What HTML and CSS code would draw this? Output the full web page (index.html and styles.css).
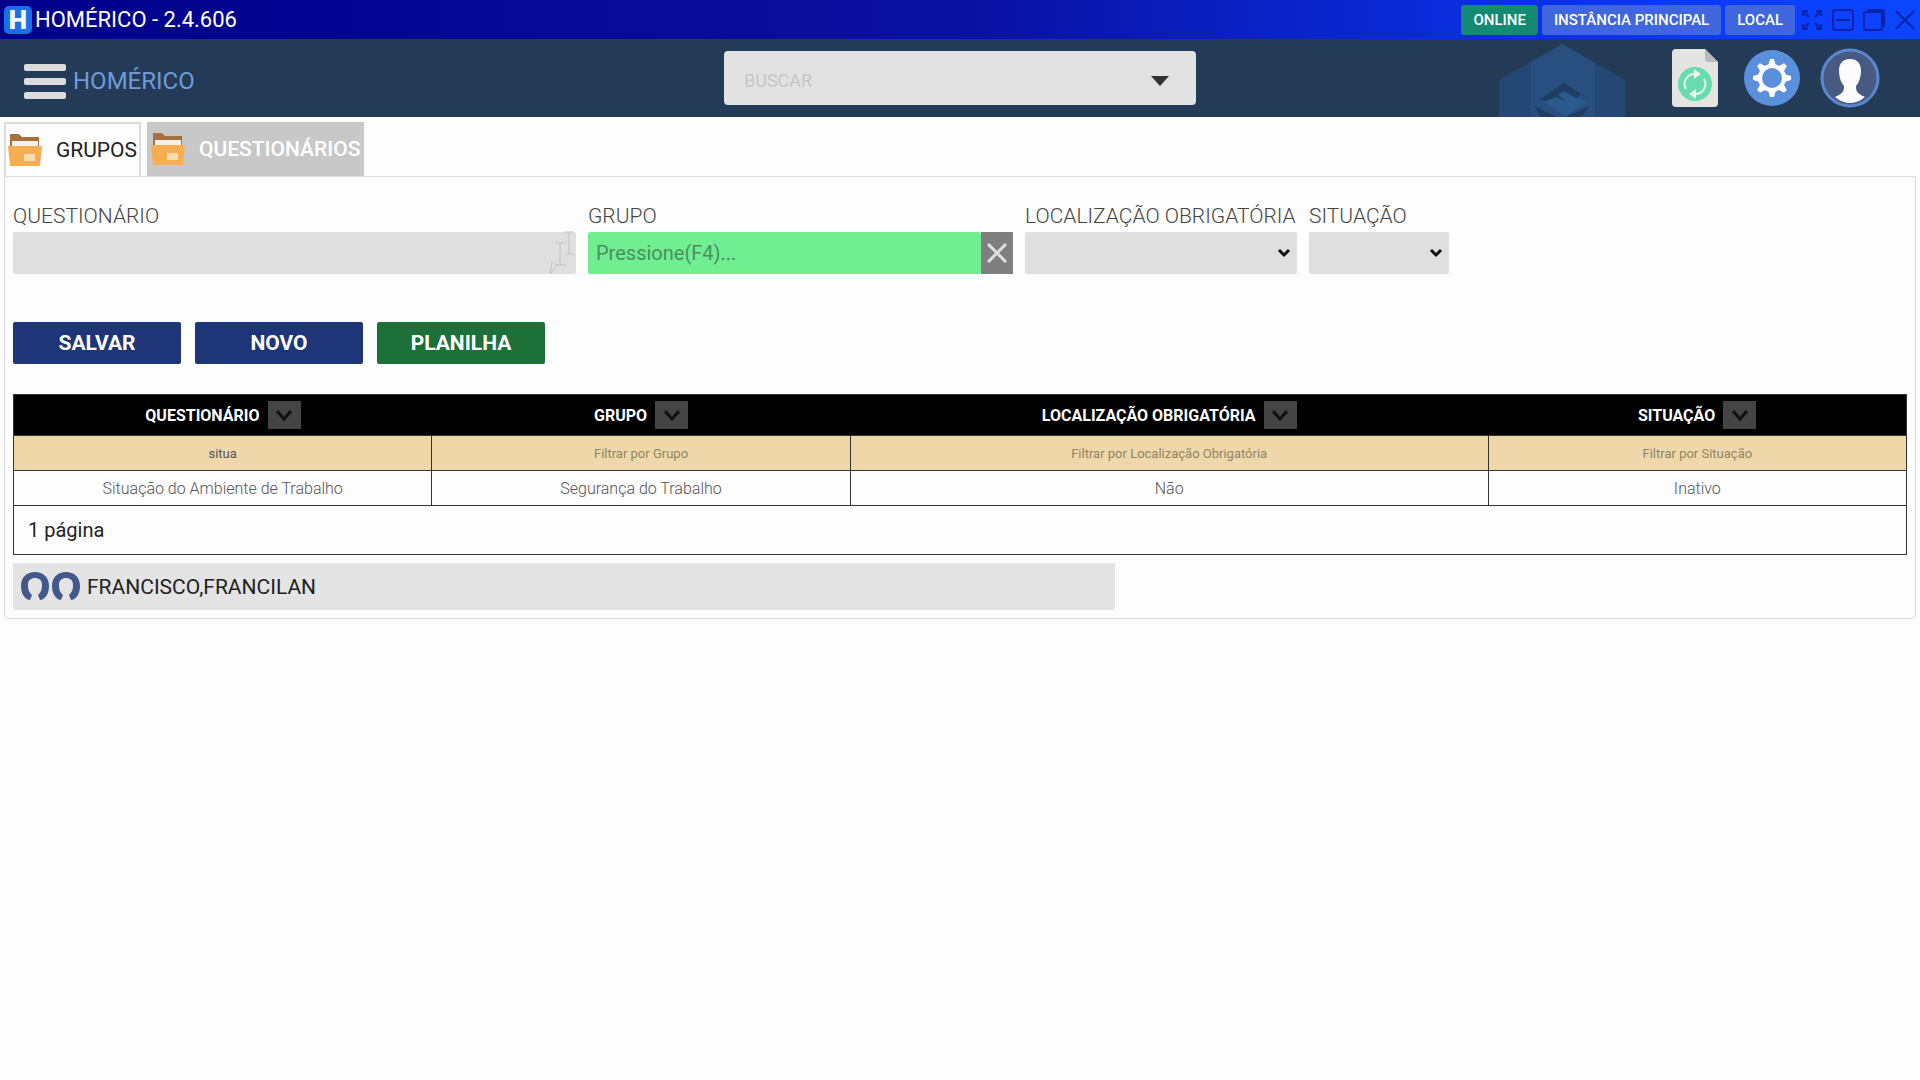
FILE: index.html
```html
<!DOCTYPE html>
<html lang="pt-BR">
<head>
    <meta charset="UTF-8">
    <meta name="viewport" content="width=device-width, initial-scale=1.0">
    <title>HOMÉRICO - 2.4.606</title>
    <link rel="stylesheet" href="styles.css">
</head>
<body>
    <div class="titlebar">
        <span class="logo">H</span>
        <span class="app-name">HOMÉRICO - 2.4.606</span>
        <div class="badges">
            <span class="badge online">ONLINE</span>
            <span class="badge">INSTÂNCIA PRINCIPAL</span>
            <span class="badge">LOCAL</span>
        </div>
        <div class="window-buttons">
            <button type="button" aria-label="Tela cheia">
                <svg viewBox="0 0 22 22"><path d="M8 8 2 2M2 7V2h5M14 8l6-6M15 2h5v5M8 14l-6 6M2 15v5h5M14 14l6 6M20 15v5h-5"/></svg>
            </button>
            <button type="button" aria-label="Minimizar">
                <svg viewBox="0 0 22 22"><rect x="1" y="1" width="20" height="20" rx="2"/><path d="M4 11h14"/></svg>
            </button>
            <button type="button" aria-label="Restaurar">
                <svg viewBox="0 0 22 22"><rect x="1" y="3" width="18" height="18" rx="2"/><path d="M4 1h15q2 0 2 2v15"/></svg>
            </button>
            <button type="button" aria-label="Fechar">
                <svg viewBox="0 0 22 22"><path d="M2 2l18 18M20 2 2 20"/></svg>
            </button>
        </div>
    </div>

    <header class="header">
        <div class="brand">
            <button type="button" class="menu" aria-label="Menu"><span></span><span></span><span></span></button>
            <span class="brand-name">HOMÉRICO</span>
        </div>
        <div class="search">
            <input type="text" placeholder="BUSCAR" aria-label="Buscar">
            <svg class="caret" viewBox="0 0 18 10"><path d="M0 0h18L9 10z"/></svg>
        </div>
        <div class="tools">
            <svg class="hexagon" viewBox="0 0 126 73">
                <path fill="#264b78" d="M63 0 126 36V73H0V36z"/>
                <path fill="#284f80" d="M63 0 96 19V73H32V19z"/>
                <path fill="#234570" d="M32 18v55H0V36zM96 18v55h30V36z" opacity=".6"/>
                <path fill="#2b5a8e" d="M44 57 66 47l22 11-22 14z"/>
                <path fill="#1d3d63" d="M40 56 65 39l17 11-5 4-12-7-6 4 8 6-10-4-10 4z"/>
                <path fill="#1d3d63" d="M35 62 58 73H42zM91 62 66 73h16z"/>
            </svg>
            <button type="button" class="tool" aria-label="Atualizar">
                <svg class="file" viewBox="0 0 46 58">
                    <path fill="#e4e4e2" d="M4 0h29l13 13v41q0 4-4 4H4q-4 0-4-4V4q0-4 4-4z"/>
                    <path fill="#b9b9be" d="M33 0 46 13H36q-3 0-3-3z"/>
                    <circle cx="23" cy="35" r="17" fill="#67dcae"/>
                    <path fill="none" stroke="#e9f7ee" stroke-width="2" d="M14 40a10 10 0 0 1 9-15M32 30a10 10 0 0 1-9 15"/>
                    <path fill="#e9f7ee" d="M22 20l7 5-7 5zM24 50l-7-5 7-5z"/>
                </svg>
            </button>
            <button type="button" class="tool" aria-label="Configurações">
                <svg class="gear" viewBox="-28 -28 56 56">
                    <circle r="28" fill="#5a8fdc"/>
                    <g fill="#fff">
                        <circle r="14"/>
                        <path id="tooth" d="M-4-12-2-19h4l2 7V12l-2 7h-4l-2-7z"/>
                        <use href="#tooth" transform="rotate(45)"/>
                        <use href="#tooth" transform="rotate(90)"/>
                        <use href="#tooth" transform="rotate(135)"/>
                    </g>
                    <circle r="10" fill="#5a8fdc"/>
                </svg>
            </button>
            <button type="button" class="tool" aria-label="Usuário">
                <svg class="avatar" viewBox="-30 -30 60 60">
                    <circle r="28" fill="#485a82" stroke="#5a88cf" stroke-width="3"/>
                    <path fill="#fcfcfc" d="M0-19C8-19 11-14 11-7 11 0 8 6 6 8c0 6 1 7 9 11Q8 25 0 25t-15-6C-7 15-6 14-6 8-8 6-11 0-11-7c0-7 3-12 11-12z"/>
                </svg>
            </button>
        </div>
    </header>

    <nav class="tabs">
        <button type="button" class="tab active">
            <svg class="folder" viewBox="0 0 34 34"><path fill="#a8703f" d="M2 1h9l3 3h17v12H2z"/><path fill="#f4f0ea" d="M4 8h26v10H4z"/><path fill="#f7ad52" d="M0 13h34l-2 20H2z"/><path fill="#f8dcae" d="M16 21h11v7H16z"/></svg>
            GRUPOS
        </button>
        <button type="button" class="tab">
            <svg class="folder" viewBox="0 0 34 34"><path fill="#a8703f" d="M2 1h9l3 3h17v12H2z"/><path fill="#f4f0ea" d="M4 8h26v10H4z"/><path fill="#f7ad52" d="M0 13h34l-2 20H2z"/><path fill="#f8dcae" d="M16 21h11v7H16z"/></svg>
            QUESTIONÁRIOS
        </button>
    </nav>

    <main class="panel">
        <form class="fields">
            <div class="field field-name">
                <label for="questionario">QUESTIONÁRIO</label>
                <input type="text" id="questionario">
                <svg class="cursor" viewBox="0 0 28 52"><path d="M16 8h10M21 8v22M17 30h9M7 19h11M12 19v22M7 41h11M2 50l8-10M2 50l2-12"/></svg>
            </div>
            <div class="field field-group">
                <label for="grupo">GRUPO</label>
                <div class="lookup">
                    <input type="text" id="grupo" placeholder="Pressione(F4)...">
                    <button type="button" aria-label="Limpar">
                        <svg viewBox="0 0 20 20"><path d="M1 1l18 18M19 1 1 19"/></svg>
                    </button>
                </div>
            </div>
            <div class="field field-location">
                <label for="localizacao">LOCALIZAÇÃO OBRIGATÓRIA</label>
                <select id="localizacao"><option></option></select>
            </div>
            <div class="field field-status">
                <label for="situacao">SITUAÇÃO</label>
                <select id="situacao"><option></option></select>
            </div>
        </form>

        <div class="actions">
            <button type="button">SALVAR</button>
            <button type="button">NOVO</button>
            <button type="button" class="sheet">PLANILHA</button>
        </div>

        <table class="grid">
            <colgroup>
                <col class="col">
                <col class="col">
                <col>
                <col class="col">
            </colgroup>
            <thead>
                <tr>
                    <th><div class="head">QUESTIONÁRIO <button type="button" aria-label="Ordenar"><svg viewBox="0 0 16 12"><path d="M1 2l7 8 7-8"/></svg></button></div></th>
                    <th><div class="head">GRUPO <button type="button" aria-label="Ordenar"><svg viewBox="0 0 16 12"><path d="M1 2l7 8 7-8"/></svg></button></div></th>
                    <th><div class="head">LOCALIZAÇÃO OBRIGATÓRIA <button type="button" aria-label="Ordenar"><svg viewBox="0 0 16 12"><path d="M1 2l7 8 7-8"/></svg></button></div></th>
                    <th><div class="head">SITUAÇÃO <button type="button" aria-label="Ordenar"><svg viewBox="0 0 16 12"><path d="M1 2l7 8 7-8"/></svg></button></div></th>
                </tr>
            </thead>
            <tbody>
                <tr class="filters">
                    <td><input type="text" value="situa" aria-label="Filtrar por Questionário"></td>
                    <td><input type="text" placeholder="Filtrar por Grupo" aria-label="Filtrar por Grupo"></td>
                    <td><input type="text" placeholder="Filtrar por Localização Obrigatória" aria-label="Filtrar por Localização Obrigatória"></td>
                    <td><input type="text" placeholder="Filtrar por Situação" aria-label="Filtrar por Situação"></td>
                </tr>
                <tr>
                    <td>Situação do Ambiente de Trabalho</td>
                    <td>Segurança do Trabalho</td>
                    <td>Não</td>
                    <td>Inativo</td>
                </tr>
            </tbody>
            <tfoot>
                <tr><td colspan="4">1 página</td></tr>
            </tfoot>
        </table>

        <div class="users">
            <svg viewBox="0 0 28 30"><path d="M9 28C3 27 0 21 0 14 0 5 6 0 14 0s14 5 14 14c0 7-3 13-9 14l-2-5c3-3 4-5 4-10 0-5-3-7-7-7s-7 2-7 7c0 5 1 7 4 10z"/></svg>
            <svg viewBox="0 0 28 30"><path d="M9 28C3 27 0 21 0 14 0 5 6 0 14 0s14 5 14 14c0 7-3 13-9 14l-2-5c3-3 4-5 4-10 0-5-3-7-7-7s-7 2-7 7c0 5 1 7 4 10z"/></svg>
            <span>FRANCISCO,FRANCILAN</span>
        </div>
    </main>
</body>
</html>
```

FILE: styles.css
```css
* {
    box-sizing: border-box;
}

body {
    margin: 0;
    background-color: #fdfdfd;
    color: #222;
    font-family: Roboto, "Liberation Sans", sans-serif;
}

button, input, select {
    margin: 0;
    padding: 0;
    border: none;
    border-radius: 0;
    font-family: inherit;
}

button {
    background: none;
    cursor: pointer;
}

svg {
    display: block;
}

/* window title bar */
.titlebar {
    display: flex;
    align-items: center;
    height: 39px;
    padding: 0 4px;
    background: linear-gradient(to right, #00008b, #0a10a0 50%, #0a3cff 90%, #0a46ff);
    color: #fff;
}

.logo {
    width: 28px;
    height: 28px;
    margin-right: 3px;
    border-radius: 5px;
    background-color: #1a6fe6;
    font-size: 26px;
    font-weight: 900;
    line-height: 28px;
    text-align: center;
}

.app-name {
    font-size: 22px;
}

.badges {
    display: flex;
    gap: 4px;
    margin-left: auto;
}

.badge {
    padding: 0 12px;
    border-radius: 3px;
    background-color: #3f66dc;
    font-size: 15px;
    font-weight: 500;
    line-height: 30px;
}

.online {
    background-color: #148a72;
}

.window-buttons {
    display: flex;
    gap: 9px;
    margin-left: 6px;
}

.window-buttons svg {
    width: 22px;
    height: 22px;
    fill: none;
    stroke: #0a22a8;
    stroke-width: 2;
}

/* header */
.header {
    display: grid;
    grid-template-columns: 1fr 472px 1fr;
    align-items: center;
    height: 78px;
    padding: 0 24px;
    background-color: #233b57;
}

.brand {
    display: flex;
    align-items: center;
    gap: 7px;
    padding-top: 6px;
}

.menu {
    display: flex;
    flex-direction: column;
    gap: 7px;
}

.menu span {
    width: 42px;
    height: 7px;
    border-radius: 2px;
    background-color: #dcdcdc;
}

.brand-name {
    color: #6f9ad8;
    font-size: 24px;
}

.search {
    display: flex;
    align-items: center;
    height: 54px;
    padding: 5px 27px 0 20px;
    border-radius: 4px;
    background-color: #e2e2e2;
}

.search input {
    flex: 1;
    background: none;
    font-size: 18px;
}

.search input::placeholder {
    color: #c6c6c6;
}

.caret {
    width: 18px;
    height: 10px;
    fill: #333;
}

.tools {
    display: flex;
    justify-content: flex-end;
    align-items: center;
    height: 78px;
    padding-right: 16px;
}

.hexagon {
    align-self: flex-end;
    width: 126px;
    height: 73px;
    margin-right: 47px;
}

.tool + .tool {
    margin-left: 20px;
}

.tool .file {
    width: 46px;
    height: 58px;
}

.tool:nth-of-type(2) {
    margin-left: 26px;
}

.gear {
    width: 56px;
    height: 56px;
}

.avatar {
    width: 60px;
    height: 60px;
}

/* tabs */
.tabs {
    display: flex;
    gap: 6px;
    padding: 5px 4px 0;
}

.tab {
    display: flex;
    align-items: center;
    gap: 14px;
    height: 54px;
    padding: 0 4px;
    background-color: #c8c8c8;
    color: #fff;
    font-size: 21px;
    font-weight: 500;
}

.tab.active {
    padding: 0 2px;
    border: 2px solid #dcdcdc;
    border-bottom: none;
    background-color: #fdfdfd;
    color: #222;
    font-weight: 400;
}

.folder {
    width: 34px;
    height: 34px;
}

/* panel */
.panel {
    margin: 0 4px;
    padding: 27px 8px 8px;
    border: 1px solid #dadae6;
    border-radius: 0 0 4px 4px;
}

.fields {
    display: flex;
    gap: 12px;
}

.field label {
    display: block;
    height: 28px;
    color: #444;
    font-size: 21px;
    font-weight: 300;
    line-height: 24px;
    white-space: nowrap;
}

.field input,
.field select {
    width: 100%;
    height: 42px;
    padding: 0 8px;
    border-radius: 2px;
    background-color: #dfdfdf;
    font-size: 20px;
}

.field select {
    appearance: none;
    background-image: url("data:image/svg+xml,%3Csvg xmlns='http://www.w3.org/2000/svg' viewBox='0 0 14 10'%3E%3Cpath d='M2 2l5 5 5-5' fill='none' stroke='%23111' stroke-width='3'/%3E%3C/svg%3E");
    background-position: right 6px center;
    background-repeat: no-repeat;
    background-size: 14px 10px;
}

.field-name {
    position: relative;
    width: 30%;
    max-width: 563px;
}

/* pointer trail at the end of the field */
.cursor {
    position: absolute;
    right: 0;
    bottom: -2px;
    width: 28px;
    height: 52px;
    fill: none;
    stroke: #c2c2c2;
    pointer-events: none;
}

.field-group {
    width: 22%;
    flex-grow: 1;
    max-width: 425px;
}

.field-location {
    width: 272px;
}

.field-status {
    width: 140px;
}

.lookup {
    display: flex;
}

.lookup input {
    flex: 1;
    min-width: 0;
    background-color: #70ee92;
}

.lookup input::placeholder {
    color: #4b8f5d;
}

.lookup button {
    display: flex;
    justify-content: center;
    align-items: center;
    width: 32px;
    height: 42px;
    background-color: #7f7f7f;
}

.lookup svg {
    width: 20px;
    height: 20px;
    stroke: #e0e0e0;
    stroke-width: 3;
}

.actions {
    display: flex;
    gap: 14px;
    margin: 48px 0 30px;
}

.actions button {
    width: 168px;
    height: 42px;
    border-radius: 2px;
    background-color: #1e3578;
    color: #fff;
    font-size: 21px;
    font-weight: 700;
}

.actions .sheet {
    background-color: #1c7038;
}

/* table */
.grid {
    width: 100%;
    border: 1px solid #333;
    border-collapse: collapse;
    table-layout: fixed;
}

.col {
    width: 22.1%;
}

.grid th {
    height: 41px;
    padding: 0;
    background-color: #000;
    color: #fff;
    font-size: 16px;
    font-weight: 700;
}

.head {
    display: flex;
    justify-content: center;
    align-items: center;
    gap: 8px;
}

.head button {
    display: flex;
    justify-content: center;
    align-items: center;
    width: 33px;
    height: 28px;
    background-color: #444;
}

.head svg {
    width: 16px;
    height: 12px;
    fill: none;
    stroke: #111;
    stroke-width: 3;
}

.grid td {
    height: 35px;
    padding: 0;
    border: 1px solid #333;
    color: #555;
    font-size: 16px;
    font-weight: 300;
    text-align: center;
}

.filters input {
    display: block;
    width: 100%;
    height: 34px;
    background-color: #eed8aa;
    color: #555;
    font-size: 13px;
    text-align: center;
}

.filters input::placeholder {
    color: #8f8562;
}

.grid tfoot td {
    height: 49px;
    padding-left: 14px;
    color: #222;
    font-size: 20px;
    font-weight: 400;
    text-align: left;
}

.users {
    display: flex;
    align-items: center;
    gap: 3px;
    width: 58.2%;
    height: 47px;
    margin-top: 8px;
    padding-left: 8px;
    background-color: #e4e4e4;
    font-size: 21px;
}

.users svg {
    width: 28px;
    height: 30px;
    fill: #42598a;
}

.users span {
    margin-left: 4px;
}
```
